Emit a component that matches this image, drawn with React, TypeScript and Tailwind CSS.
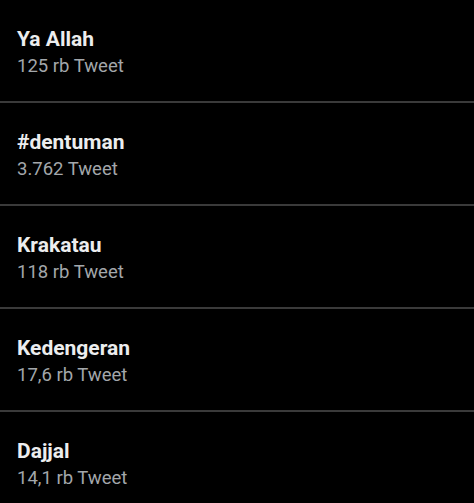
const TRENDS = [
  { name: "Ya Allah", count: "125 rb Tweet" },
  { name: "#dentuman", count: "3.762 Tweet" },
  { name: "Krakatau", count: "118 rb Tweet" },
  { name: "Kedengeran", count: "17,6 rb Tweet" },
  { name: "Dajjal", count: "14,1 rb Tweet" },
];

export default function App() {
  return (
    <div
      className="w-[474px] h-[503px] overflow-hidden bg-black"
      style={{ fontFamily: "Roboto, 'Liberation Sans', sans-serif" }}
    >
      {TRENDS.map((t, i) => (
        <div
          key={t.name}
          className={`h-[103px] px-[17px] pt-[26px] ${i < TRENDS.length - 1 ? "border-b-2 border-[#3a3a3a]" : ""}`}
        >
          <p className="text-[21px] leading-[27px] font-bold text-[#ecedee]">{t.name}</p>
          <p className="text-[18.5px] leading-[24px] mt-[1px] text-[#a3a7ab]">{t.count}</p>
        </div>
      ))}
    </div>
  );
}
